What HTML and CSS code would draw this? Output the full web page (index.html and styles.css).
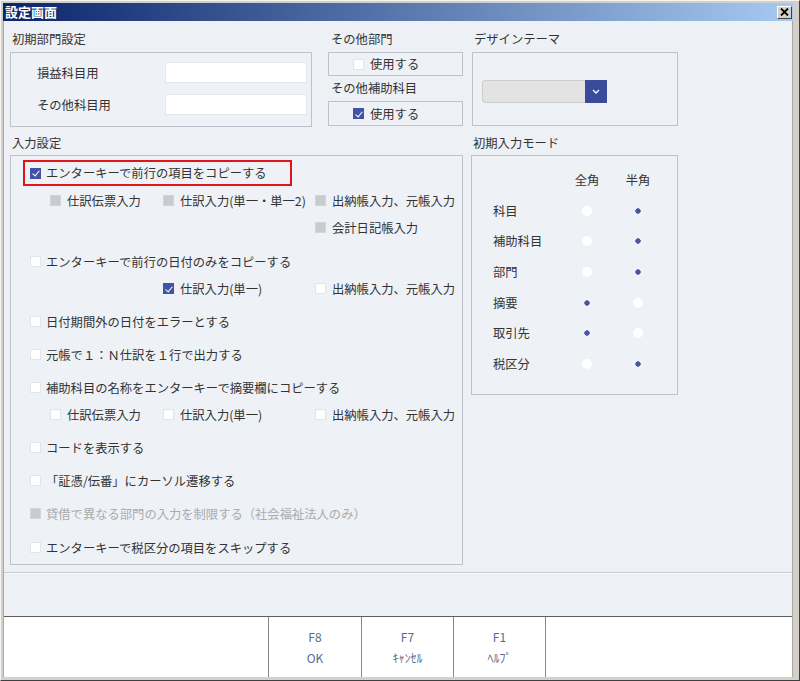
FILE: index.html
```html
<!DOCTYPE html>
<html lang="ja">
<head>
<meta charset="utf-8">
<title>設定画面</title>
<link rel="stylesheet" href="styles.css">
</head>
<body>
<div class="window">
  <div class="titlebar">
    <span class="title">設定画面</span>
    <span class="close"><svg width="9" height="8" viewBox="0 0 9 8"><path d="M1 0.5 L8 7.5 M8 0.5 L1 7.5" stroke="#000" stroke-width="1.8" fill="none"/></svg></span>
  </div>
  <div class="body">
    <div class="main">
      <div class="top">
        <div class="col col-dept">
          <div class="label">初期部門設定</div>
          <div class="box dept-box">
            <div class="field-row"><span class="field-label">損益科目用</span><span class="input"></span></div>
            <div class="field-row"><span class="field-label">その他科目用</span><span class="input"></span></div>
          </div>
        </div>
        <div class="col col-other">
          <div class="label lbl-other">その他部門</div>
          <div class="box small-box"><span class="cb"></span>使用する</div>
          <div class="label label2 lbl-other">その他補助科目</div>
          <div class="box small-box tall"><span class="cb on"></span>使用する</div>
        </div>
        <div class="col col-theme">
          <div class="label">デザインテーマ</div>
          <div class="box theme-box">
            <div class="select">
              <span class="select-field"></span>
              <span class="select-btn"><svg width="8" height="5" viewBox="0 0 8 5"><path d="M1 1 L4 4 L7 1" stroke="#fff" stroke-width="1.3" fill="none"/></svg></span>
            </div>
          </div>
        </div>
      </div>
      <div class="bottom">
        <div class="col col-input">
          <div class="label sec">入力設定</div>
          <div class="box input-box">
            <div class="highlight"><span class="cb on"></span>エンターキーで前行の項目をコピーする</div>
            <div class="sub mt1">
              <span class="item dis-item"><span class="cb dis"></span>仕訳伝票入力</span>
              <span class="item dis-item"><span class="cb dis"></span>仕訳入力(単一・単一2)</span>
              <span class="item dis-item"><span class="cb dis"></span>出納帳入力、元帳入力</span>
            </div>
            <div class="sub">
              <span></span>
              <span></span>
              <span class="item dis-item"><span class="cb dis"></span>会計日記帳入力</span>
            </div>
            <div class="row mt7"><span class="cb"></span>エンターキーで前行の日付のみをコピーする</div>
            <div class="sub">
              <span></span>
              <span class="item"><span class="cb on"></span>仕訳入力(単一)</span>
              <span class="item"><span class="cb"></span>出納帳入力、元帳入力</span>
            </div>
            <div class="row mt6"><span class="cb"></span>日付期間外の日付をエラーとする</div>
            <div class="row mt6"><span class="cb"></span>元帳で１：Ｎ仕訳を１行で出力する</div>
            <div class="row mt6"><span class="cb"></span>補助科目の名称をエンターキーで摘要欄にコピーする</div>
            <div class="sub">
              <span class="item"><span class="cb"></span>仕訳伝票入力</span>
              <span class="item"><span class="cb"></span>仕訳入力(単一)</span>
              <span class="item"><span class="cb"></span>出納帳入力、元帳入力</span>
            </div>
            <div class="row mt6"><span class="cb"></span>コードを表示する</div>
            <div class="row mt6"><span class="cb"></span>「証憑/伝番」にカーソル遷移する</div>
            <div class="row mt6 disabled"><span class="cb dis"></span>貸借で異なる部門の入力を制限する（社会福祉法人のみ）</div>
            <div class="row mt7"><span class="cb"></span>エンターキーで税区分の項目をスキップする</div>
          </div>
        </div>
        <div class="col col-mode">
          <div class="label sec">初期入力モード</div>
          <div class="box mode-box">
            <div class="mode-grid">
              <span></span><span class="hd">全角</span><span class="hd">半角</span>
              <span>科目</span><span class="radio"></span><span class="radio on"></span>
              <span>補助科目</span><span class="radio"></span><span class="radio on"></span>
              <span>部門</span><span class="radio"></span><span class="radio on"></span>
              <span>摘要</span><span class="radio on"></span><span class="radio"></span>
              <span>取引先</span><span class="radio on"></span><span class="radio"></span>
              <span>税区分</span><span class="radio"></span><span class="radio on"></span>
            </div>
          </div>
        </div>
      </div>
    </div>
    <div class="sep"></div>
    <div class="spacer"></div>
    <div class="footer">
      <div class="fcell"></div>
      <div class="fcell fkey"><span>F8</span><span>OK</span></div>
      <div class="fcell fkey"><span>F7</span><span>ｷｬﾝｾﾙ</span></div>
      <div class="fcell fkey"><span>F1</span><span>ﾍﾙﾌﾟ</span></div>
      <div class="fcell"></div>
    </div>
  </div>
</div>
</body>
</html>
```

FILE: styles.css
```css
* { box-sizing: border-box; margin: 0; padding: 0; }
html, body { width: 800px; height: 681px; overflow: hidden; }
body {
  font-family: "Noto Sans CJK JP", "Noto Sans", sans-serif;
  font-size: 12.3px;
  color: #333;
  background: #d4d0c8;
}
.window {
  width: 800px;
  height: 681px;
  display: flex;
  flex-direction: column;
  background: #d4d0c8;
  border: 1px solid;
  border-color: #f4f4f4 #404040 #404040 #f4f4f4;
  padding: 2px 6px 3px 2px;
}
.titlebar {
  height: 18px;
  flex: none;
  display: flex;
  align-items: center;
  justify-content: space-between;
  background: linear-gradient(to right, #0a246a, #a6caf0);
  padding: 0 1px 0 2px;
}
.title { color: #fff; font-weight: bold; font-size: 13px; line-height: 18px; }
.close {
  width: 15px;
  height: 13px;
  background: #d4d0c8;
  border: 1px solid;
  border-color: #fff #404040 #404040 #fff;
  display: flex;
  align-items: center;
  justify-content: center;
}
.body {
  flex: 1;
  display: flex;
  flex-direction: column;
  background: #edf0f5;
  border-left: 1px solid #a8a8a8;
  border-right: 1px solid #a8a8a8;
}
.main { padding: 8px 0 0 6px; }
.top { display: flex; }
.col-dept { width: 302px; }
.col-other { width: 135px; margin-left: 16px; }
.col-theme { width: 206px; margin-left: 9px; }
.label { height: 23px; line-height: 20px; padding-left: 2px; white-space: nowrap; }
.lbl-other { padding-left: 3px; }
.label2 { height: 25px; line-height: 24px; }
.box { background: #eef1f6; border: 1px solid #bec3cb; }
.dept-box {
  height: 75px;
  padding: 9px 0 0 26px;
  display: flex;
  flex-direction: column;
  gap: 11px;
}
.field-row { display: flex; align-items: center; height: 21px; }
.field-label { width: 128px; }
.input { width: 142px; height: 21px; background: #fff; border: 1px solid #e4e7ec; }
.small-box { height: 24px; display: flex; align-items: center; padding-left: 24px; }
.small-box.tall { height: 25px; }
.small-box .cb { margin-right: 6px; }
.theme-box { height: 74px; padding: 27px 0 0 9px; }
.select { display: flex; width: 125px; height: 23px; }
.select-field {
  width: 103px;
  background: #e3e3e3;
  border: 1px solid #cdcdcd;
  border-right: none;
  border-radius: 4px 0 0 4px;
}
.select-btn {
  width: 22px;
  background: #3b4b9c;
  display: flex;
  align-items: center;
  justify-content: center;
}
.bottom { display: flex; margin-top: 4px; }
.col-input { width: 453px; }
.col-mode { width: 207px; margin-left: 8px; }
.label.sec { height: 24px; line-height: 24px; }
.input-box { height: 410px; padding-top: 4px; }
.highlight {
  margin-left: 12px;
  width: 269px;
  height: 26px;
  border: 2px solid #e0141b;
  display: flex;
  align-items: center;
  padding-left: 5px;
}
.row { height: 27px; display: flex; align-items: center; padding-left: 19px; white-space: nowrap; }
.sub {
  height: 27px;
  display: grid;
  grid-template-columns: 113px 152px auto;
  align-items: center;
  padding-left: 39px;
  white-space: nowrap;
}
.mt1 { margin-top: 1px; }
.mt6 { margin-top: 6px; }
.mt7 { margin-top: 7px; }
.item { display: flex; align-items: center; }
.sub .cb { margin-right: 6px; }
.cb {
  width: 11px;
  height: 11px;
  flex: none;
  margin-right: 5px;
  background: #fff;
  border: 1px solid #e2e5ea;
  position: relative;
}
.cb.on { background: #4253a6; border-color: #4253a6; }
.cb.on::after {
  content: "";
  position: absolute;
  left: 3px;
  top: 0.5px;
  width: 3px;
  height: 6px;
  border: solid #fff;
  border-width: 0 1.6px 1.6px 0;
  transform: rotate(40deg);
}
.cb.dis { background: #c9cbcf; border-color: #d3d5d9; }
.disabled { color: #a9abb0; }
.mode-box { height: 240px; padding: 9px 0 0 21px; }
.mode-grid {
  display: grid;
  grid-template-columns: 69px 50px 52px;
  grid-auto-rows: 30.6px;
  align-items: center;
}
.hd { text-align: center; }
.radio {
  justify-self: center;
  width: 10px;
  height: 10px;
  border-radius: 50%;
  background: #fff;
}
.radio.on { background: radial-gradient(circle, #4a55a6 0 2.4px, #f1f3f8 3px); }
.sep { margin-top: 7px; height: 2px; border-top: 1px solid #c6cad1; border-bottom: 1px solid #fafbfc; }
.spacer { flex: 1; }
.footer {
  height: 61px;
  flex: none;
  background: #fff;
  border-top: 1px solid #5e5e5e;
  display: grid;
  grid-template-columns: 264px 93px 92px 92px 1fr;
}
.fcell + .fcell { border-left: 1px solid #8a8a8a; }
.fkey {
  display: flex;
  flex-direction: column;
  align-items: center;
  justify-content: center;
  line-height: 21px;
  color: #5b6a8e;
  font-size: 12px;
}
```
